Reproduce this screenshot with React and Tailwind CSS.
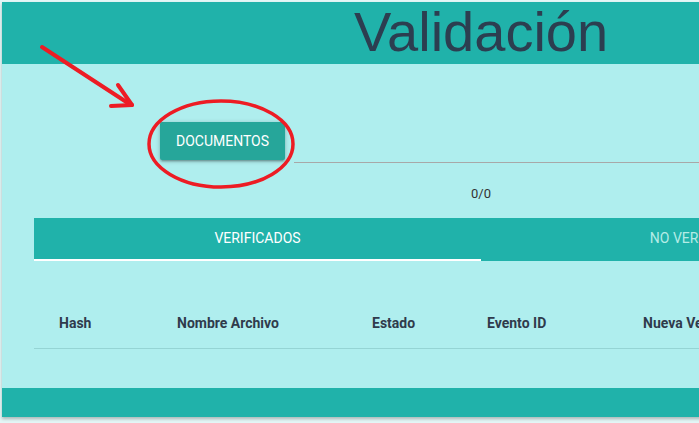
import React from 'react';

const columnas = [
  { label: 'Hash', w: 'w-[118px]' },
  { label: 'Nombre Archivo', w: 'w-[195px]' },
  { label: 'Estado', w: 'w-[115px]' },
  { label: 'Evento ID', w: 'w-[156px]' },
  { label: 'Nueva Versión', w: 'w-[200px]' },
];

const Anotaciones = () => (
  <svg className="absolute left-0 top-0 pointer-events-none" width="699" height="423" viewBox="0 0 699 423">
    <g stroke="#ed1c24" fill="none" strokeLinecap="round" strokeLinejoin="round">
      <line x1="42" y1="47" x2="131" y2="105" strokeWidth="4" />
      <line x1="118" y1="85" x2="132" y2="105" strokeWidth="4" />
      <line x1="111" y1="106" x2="132" y2="105" strokeWidth="4" />
      <ellipse cx="221" cy="144" rx="72" ry="43" strokeWidth="3.5" />
    </g>
  </svg>
);

export default function App() {
  return (
    <div className="relative w-[699px] h-[423px] overflow-hidden bg-[#e3f6f6]" style={{ fontFamily: 'Roboto, "Liberation Sans", sans-serif' }}>
      <div className="ml-[2px] mt-[2px] w-[958px] shadow-[0_2px_3px_rgba(0,0,0,0.25)]">
        {/* Cabecera */}
        <header className="h-[62px] bg-[#20b2aa] flex justify-center items-start overflow-hidden">
          <h1 className="text-[#2c3e50] text-[56px] leading-[56px] mt-[2px]" style={{ fontFamily: '"Liberation Sans", Arial, sans-serif' }}>
            Validación
          </h1>
        </header>

        <main className="bg-[#afeeee] h-[324px] pt-[58px]">
          <div className="flex items-start pl-[158px]">
            <button className="w-[125px] h-[38px] bg-[#26a69a] text-white text-[14px] uppercase rounded-[2px] shadow-[0_2px_2px_0_rgba(0,0,0,0.14),0_3px_1px_-2px_rgba(0,0,0,0.12),0_1px_5px_0_rgba(0,0,0,0.2)]">
              Documentos
            </button>
            <div className="flex-1 ml-[9px] mt-[40px] h-px bg-[#a8a8a8]" />
          </div>

          <p className="mt-[21px] text-center text-[13px] leading-[20px] text-[#333]">0/0</p>

          <div className="mx-[32px] mt-[14px]">
            {/* Pestañas */}
            <div className="flex h-[43px] bg-[#20b2aa]">
              <div className="relative flex-1 flex items-center justify-center text-white text-[14px] uppercase pb-[2px]">
                Verificados
                <span className="absolute left-0 right-0 bottom-0 h-[2px] bg-white" />
              </div>
              <div className="flex-1 flex items-center justify-center text-[#b4ece6] text-[14px] uppercase pb-[2px]">
                No Verificados
              </div>
            </div>

            {/* Tabla */}
            <div className="mt-[38px] flex h-[50px] items-center border-b border-[#95d4d4]">
              {columnas.map(c => (
                <div key={c.label} className={`${c.w} pl-[25px] text-[14px] font-bold text-[#2f3b4c]`}>
                  {c.label}
                </div>
              ))}
            </div>
          </div>
        </main>

        <footer className="h-[29px] bg-[#20b2aa]" />
      </div>
      <Anotaciones />
    </div>
  );
}
